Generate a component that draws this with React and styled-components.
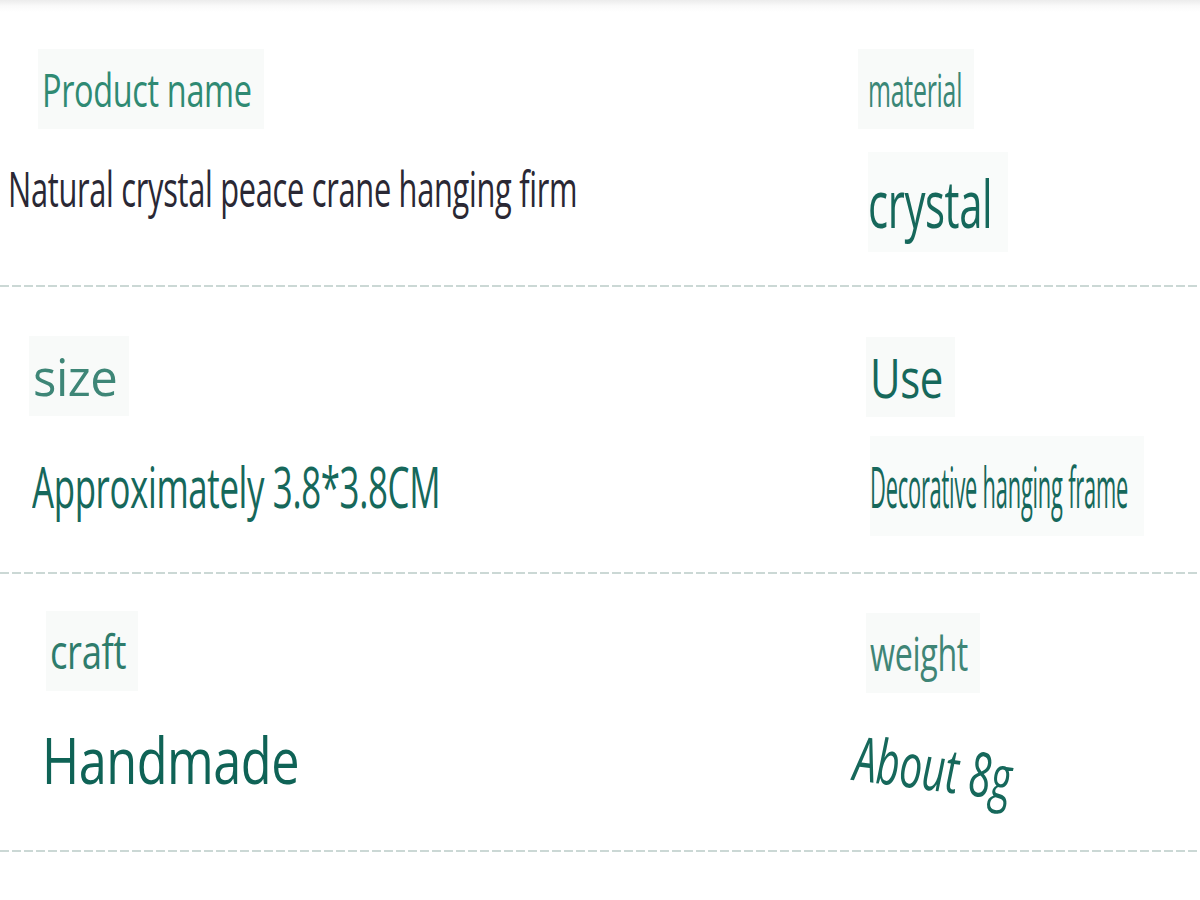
import React, { useLayoutEffect, useRef, useState } from 'react';
import styled, { createGlobalStyle } from 'styled-components';

const GlobalStyle = createGlobalStyle`
  html, body {
    margin: 0;
    padding: 0;
    background: #ffffff;
  }
  body {
    font-family: "Open Sans", "Liberation Sans", sans-serif;
  }
`

const Sheet = styled.div`
  width: 1200px;
  height: 900px;
  overflow: hidden;
  background: linear-gradient(to bottom, #ececec 0px, #fafafa 6px, #ffffff 12px);
`

const Row = styled.section`
  display: grid;
  grid-template-columns: 858px 1fr;
  height: ${p => p.$height}px;
  padding-top: ${p => p.$top}px;
  box-sizing: border-box;
`

const Divider = styled.div`
  height: 2px;
  background: repeating-linear-gradient(90deg, #cbd8d5 0 9px, transparent 9px 12px);
`

const Cell = styled.div`
  display: flex;
  flex-direction: column;
  align-items: flex-start;
`

const LabelBox = styled.div`
  height: 80px;
  margin-left: ${p => p.$x}px;
  margin-top: ${p => p.$dy || 0}px;
  margin-bottom: ${p => -(p.$dy || 0)}px;
  padding: 0 12px 0 ${p => p.$pad || 4}px;
  display: flex;
  align-items: center;
  background: #f8faf9;
`

const ValueBox = styled.div`
  height: 100px;
  margin-top: ${p => 22 + (p.$dy || 0)}px;
  margin-left: ${p => p.$x}px;
  padding: 0 16px 0 0;
  display: flex;
  align-items: center;
  background: ${p => (p.$tinted ? '#f9fbfa' : 'transparent')};
`

const Fit = styled.span`
  display: inline-block;
  width: ${p => p.$w}px;
  overflow: visible;
`

const Text = styled.span`
  display: inline-block;
  white-space: nowrap;
  font-size: ${p => p.$size}px;
  line-height: 1;
  color: ${p => p.$color};
  font-style: ${p => (p.$italic ? 'italic' : 'normal')};
  letter-spacing: -0.01em;
  transform-origin: left center;
`

// squeezes the text to the width it takes in the picture
function FitText({ width, rotate = 0, ...rest }) {
  const ref = useRef(null)
  const [scale, setScale] = useState(1)
  useLayoutEffect(() => {
    if (ref.current) setScale(width / ref.current.offsetWidth)
  }, [width])
  return (
    <Fit $w={width}>
      <Text
        ref={ref}
        style={{ transform: `scaleX(${scale}) rotate(${rotate}deg)` }}
        {...rest}
      />
    </Fit>
  )
}

const LABEL = '#3a8777'
const VALUE = '#16685b'
const DARK = '#2a2834'

const rows = [
  {
    height: 285, top: 50,
    cells: [
      {
        label: { text: 'Product name', x: 38, size: 46, w: 210, color: '#2f8a73', dy: -1 },
        value: { text: 'Natural crystal peace crane hanging firm', x: 8, size: 50, w: 569, color: DARK, dy: -14 },
      },
      {
        label: { text: 'material', x: 0, pad: 10, size: 46, w: 94, color: LABEL, dy: -1 },
        value: { text: 'crystal', x: 10, size: 66, w: 124, color: VALUE, tinted: true },
      },
    ],
  },
  {
    height: 285, top: 57,
    cells: [
      {
        label: { text: 'size', x: 29, size: 52, w: 84, color: '#3e8677', dy: -8 },
        value: { text: 'Approximately 3.8*3.8CM', x: 32, size: 56, w: 408, color: VALUE, dy: -10 },
      },
      {
        label: { text: 'Use', x: 8, size: 54, w: 73, color: VALUE, dy: -7 },
        value: { text: 'Decorative hanging frame', x: 12, size: 56, w: 258, color: VALUE, dy: -10, tinted: true },
      },
    ],
  },
  {
    height: 276, top: 44,
    cells: [
      {
        label: { text: 'craft', x: 46, size: 48, w: 76, color: '#2e7c6c', dy: -7 },
        value: { text: 'Handmade', x: 42, size: 64, w: 257, color: '#0f6356', dy: -10 },
      },
      {
        label: { text: 'weight', x: 8, size: 48, w: 98, color: '#3f8576', dy: -5 },
        value: { text: 'About 8g', x: -4, size: 62, w: 158, color: VALUE, dy: -14, italic: true, rotate: 5 },
      },
    ],
  },
]

export default function App() {
  return (
    <Sheet>
      <GlobalStyle />
      {rows.map((row, i) => (
        <React.Fragment key={i}>
          <Row $height={row.height} $top={row.top}>
            {row.cells.map(({ label, value }, j) => (
              <Cell key={j}>
                <LabelBox $x={label.x} $pad={label.pad} $dy={label.dy}>
                  <FitText width={label.w} $size={label.size} $color={label.color}>{label.text}</FitText>
                </LabelBox>
                <ValueBox $x={value.x} $dy={value.dy} $tinted={value.tinted}>
                  <FitText
                    width={value.w}
                    rotate={value.rotate}
                    $size={value.size}
                    $color={value.color}
                    $italic={value.italic}
                  >
                    {value.text}
                  </FitText>
                </ValueBox>
              </Cell>
            ))}
          </Row>
          <Divider />
        </React.Fragment>
      ))}
    </Sheet>
  );
}
